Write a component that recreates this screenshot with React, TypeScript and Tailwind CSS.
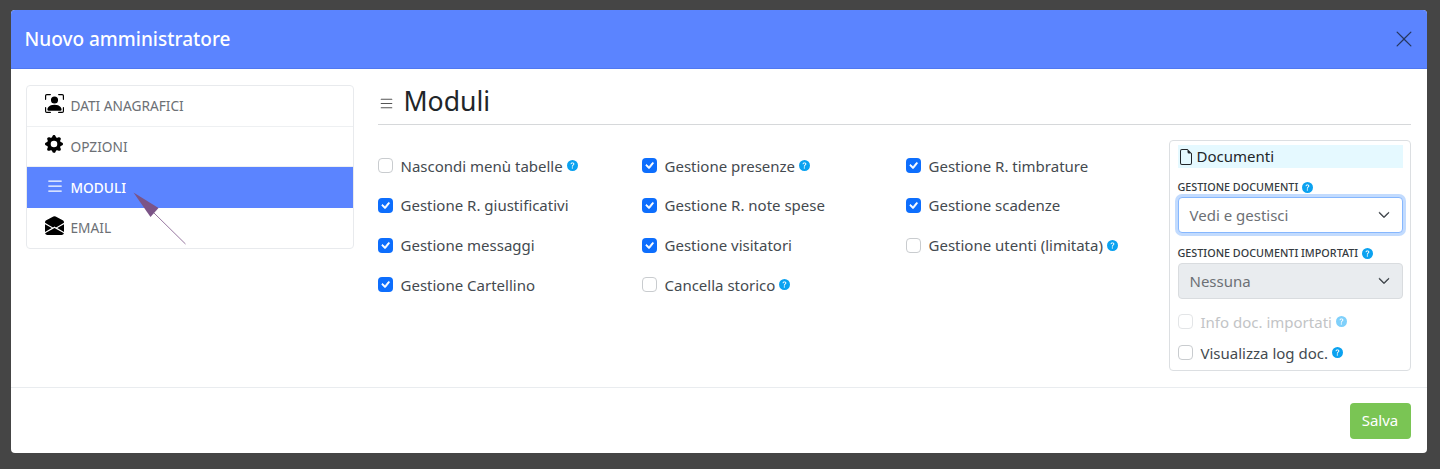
import { BsPersonBoundingBox, BsGearFill, BsList, BsEnvelopeOpenFill, BsFileEarmark, BsQuestionCircleFill, BsChevronDown, BsXLg, BsCheck } from 'react-icons/bs'
import type { ReactNode } from 'react'

const font = { fontFamily: '"Noto Sans", sans-serif' }

const Help = ({ faded }: { faded?: boolean }) => (
  <BsQuestionCircleFill size={11} className={faded ? 'ml-1 inline-block text-[#7fd0fb]' : 'ml-1 inline-block text-[#0ba2f0]'} />
)

const Check = ({ label, checked, help, disabled }: { label: string; checked?: boolean; help?: boolean; disabled?: boolean }) => (
  <div className="flex h-[39.7px] items-center">
    <span
      className={
        checked
          ? 'flex h-[15px] w-[15px] items-center justify-center rounded-[4px] bg-[#0d6efd] text-white'
          : disabled
            ? 'h-[15px] w-[15px] rounded-[4px] border border-[#e3e5e7] bg-white'
            : 'h-[15px] w-[15px] rounded-[4px] border border-[#c9cccf] bg-white'
      }
    >
      {checked && <BsCheck size={15} strokeWidth={0.8} />}
    </span>
    <span className={disabled ? 'ml-2 text-[15px] text-[#c2c4c6]' : 'ml-2 text-[15px] text-[#444a50]'}>{label}</span>
    {help && <Help faded={disabled} />}
  </div>
)

const NavItem = ({ icon, label, active }: { icon: ReactNode; label: string; active?: boolean }) => (
  <div
    className={
      active
        ? 'flex h-[40.5px] items-center bg-[#5b84ff] pl-[18px] pt-[2px] text-[13.7px] font-medium text-white'
        : 'flex h-[40.5px] items-center border-b border-[#eef0f2] pl-[18px] pt-[2px] text-[13.7px] text-[#6c7075] last:border-b-0'
    }
  >
    <span className={active ? 'flex w-[26px] text-white' : 'flex w-[26px] -translate-y-[3px] text-black'}>{icon}</span>
    {label}
  </div>
)

const SelectBox = ({ value, focus }: { value: string; focus?: boolean }) => (
  <div
    className={
      focus
        ? 'flex h-[36px] items-center justify-between rounded-[4px] border border-[#86b7fe] bg-white pl-[11px] pr-3 text-[15px] text-[#6c7075] shadow-[0_0_0_3px_rgba(13,110,253,0.25)]'
        : 'flex h-[36px] items-center justify-between rounded-[4px] border border-[#d9dcdf] bg-[#e9ecef] pl-[11px] pr-3 text-[15px] text-[#6c7075]'
    }
  >
    {value}
    <BsChevronDown size={12} strokeWidth={1} className="text-[#343a40]" />
  </div>
)

export default function App() {
  return (
    <div className="min-h-[469px] bg-[#454545] pb-4 pl-[10.5px] pr-[13.5px] pt-2.5" style={font}>
      <div className="relative overflow-hidden rounded-[4px] bg-white">
        <div className="flex h-[59px] items-center justify-between border-b border-[#5078f0] bg-[#5b84ff] pl-[14px] pr-[13px]">
          <h1 className="text-[19px] font-medium text-white">Nuovo amministratore</h1>
          <BsXLg size={20} className="text-[#26375f]" />
        </div>

        <div className="flex h-[318px] items-start pl-[15px] pr-[16px] pt-4">
          <div className="w-[328px] shrink-0 overflow-hidden rounded-[4px] border border-[#e8eaed]">
            <NavItem icon={<BsPersonBoundingBox size={19} />} label="DATI ANAGRAFICI" />
            <NavItem icon={<BsGearFill size={18} />} label="OPZIONI" />
            <NavItem active icon={<BsList size={20} className="-mt-1" />} label="MODULI" />
            <NavItem icon={<BsEnvelopeOpenFill size={19} />} label="EMAIL" />
          </div>

          <div className="ml-[24px] min-w-0 flex-1">
            <div className="flex h-[40px] items-center border-b border-[#d6d8da] pb-[7px] text-[#212529]">
              <BsList size={17} className="mt-1 text-[#555]" />
              <h2 className="ml-[9px] text-[26.6px] leading-none">Moduli</h2>
            </div>
            <div className="flex items-start">
              <div className="grid w-[791px] shrink-0 grid-cols-[264px_264px_263px] pt-[21px]">
                <div>
                  <Check label="Nascondi menù tabelle" help />
                  <Check label="Gestione R. giustificativi" checked />
                  <Check label="Gestione messaggi" checked />
                  <Check label="Gestione Cartellino" checked />
                </div>
                <div>
                  <Check label="Gestione presenze" checked help />
                  <Check label="Gestione R. note spese" checked />
                  <Check label="Gestione visitatori" checked />
                  <Check label="Cancella storico" help />
                </div>
                <div>
                  <Check label="Gestione R. timbrature" checked />
                  <Check label="Gestione scadenze" checked />
                  <Check label="Gestione utenti (limitata)" help />
                </div>
              </div>
              <div className="mt-[15px] h-[231px] w-[242px] shrink-0 rounded-[4px] border border-[#dcdfe2] pl-2 pr-[7px] pt-[4px]">
                <div className="flex h-[23px] items-center bg-[#e5f9ff] text-[15px] text-[#212529]">
                  <BsFileEarmark size={16} className="mr-[3px]" />
                  Documenti
                </div>
                <div className="mt-[12px] flex h-[14px] items-center text-[10.8px] font-medium text-[#343a40]">
                  GESTIONE DOCUMENTI <Help />
                </div>
                <div className="mt-[3px]">
                  <SelectBox value="Vedi e gestisci" focus />
                </div>
                <div className="mt-[13px] flex h-[14px] items-center text-[10.8px] font-medium text-[#343a40]">
                  GESTIONE DOCUMENTI IMPORTATI <Help />
                </div>
                <div className="mt-[3px]">
                  <SelectBox value="Nessuna" />
                </div>
                <div className="mt-[3px] flex flex-col">
                  <div className="h-[31px]">
                    <Check label="Info doc. importati" help disabled />
                  </div>
                  <div className="h-[31px]">
                    <Check label="Visualizza log doc." help />
                  </div>
                </div>
              </div>
            </div>
          </div>
        </div>

        <div className="flex h-[66px] items-center justify-end border-t border-[#e9ecef] pr-[16px]">
          <button className="h-[36px] w-[61px] rounded-[4px] bg-[#7ac554] text-[15px] text-white">Salva</button>
        </div>

        {/* annotation arrow on top of the menu */}
        <svg className="absolute left-[116px] top-[176px]" width="70" height="70" viewBox="0 0 70 70">
          <path d="M6.5 6.5 L31.5 22 L23.5 31 Z" fill="#7b5487" />
          <path d="M27 27 L58.5 58" stroke="#7b5487" strokeWidth="0.8" fill="none" />
        </svg>
      </div>
    </div>
  )
}
